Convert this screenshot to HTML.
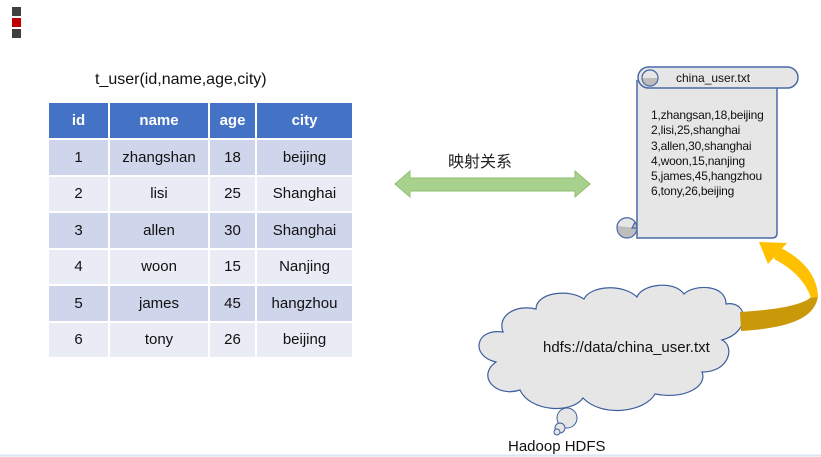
<!DOCTYPE html>
<html><head><meta charset="utf-8"><style>
body{margin:0;width:821px;height:457px;background:#fff;position:relative;overflow:hidden;font-family:"Liberation Sans","Noto Sans CJK SC",sans-serif;}
.a{position:absolute}
table{position:absolute;left:49px;top:103px;border-collapse:separate;border-spacing:2px 2px;font-size:15px;color:#111;margin:-2px}
td{text-align:center;height:34.5px;padding:0}
th{background:#4472C4;color:#fff;font-weight:bold;height:35px;padding:0}
tr.o td{background:#CFD5EA}tr.e td{background:#E9EBF5}
</style></head><body>
<div class="a" style="left:12px;top:7px;width:9px;height:9px;background:#404040"></div>
<div class="a" style="left:12px;top:18px;width:9px;height:9px;background:#c00000"></div>
<div class="a" style="left:12px;top:29px;width:9px;height:9px;background:#404040"></div>
<div class="a" style="left:95px;top:71px;font-size:16px;color:#111">t_user(id,name,age,city)</div>
<table>
<tr><th style="width:59px">id</th><th style="width:98px">name</th><th style="width:45px">age</th><th style="width:95px">city</th></tr>
<tr class="o"><td>1</td><td>zhangshan</td><td>18</td><td>beijing</td></tr>
<tr class="e"><td>2</td><td>lisi</td><td>25</td><td>Shanghai</td></tr>
<tr class="o"><td>3</td><td>allen</td><td>30</td><td>Shanghai</td></tr>
<tr class="e"><td>4</td><td>woon</td><td>15</td><td>Nanjing</td></tr>
<tr class="o"><td>5</td><td>james</td><td>45</td><td>hangzhou</td></tr>
<tr class="e"><td>6</td><td>tony</td><td>26</td><td>beijing</td></tr>
</table>
<div class="a" style="left:448px;top:148px;font-size:16px;color:#222">映射关系</div>
<svg class="a" style="left:0;top:0" width="821" height="457">
<polygon points="395,184 410,171 410,178 575,178 575,171 590,184 575,197 575,191 410,191 410,197" fill="#A9D18E" stroke="#8fbf6e"/>
<path d="M637,80 L637,238 L772,238 Q777,238 777,233 L777,88" fill="#e6e6e6" stroke="#4a6aa6" stroke-width="1.5"/>
<rect x="638" y="67" width="160" height="21" rx="10.5" fill="#e6e6e6" stroke="#4a6aa6" stroke-width="1.5"/>
<circle cx="650" cy="78" r="8" fill="#bdbdbd" stroke="#4a6aa6" stroke-width="1.2"/>
<path d="M642,78 A8,8 0 0 1 658,78" fill="#e6e6e6" stroke="#4a6aa6" stroke-width="1.2"/>
<circle cx="627" cy="228" r="10" fill="#bdbdbd" stroke="#4a6aa6" stroke-width="1.2"/>
<path d="M617,226 A10,10 0 0 1 635,222 L632,228 L637,228" fill="#e6e6e6" stroke="#4a6aa6" stroke-width="1.2"/>
<path d="M503,332 C475,328 470,356 496,362 C476,376 496,398 520,390 C530,412 572,414 583,398 C602,418 645,412 655,394 C685,400 708,386 702,372 C730,372 735,346 722,340 C752,332 748,300 726,304 C726,284 694,284 684,294 C674,280 642,284 637,297 C622,283 590,286 584,299 C568,288 536,293 536,309 C515,304 497,316 503,332 Z" fill="#e6e6e6" stroke="#3d5f9e" stroke-width="1.2"/>
<circle cx="567" cy="418" r="10" fill="#e6e6e6" stroke="#3d5f9e" stroke-width="1"/>
<circle cx="560" cy="428" r="5" fill="#e6e6e6" stroke="#3d5f9e" stroke-width="1"/>
<circle cx="557" cy="432" r="3" fill="#e6e6e6" stroke="#3d5f9e" stroke-width="1"/>
<path d="M740,312 C775,310 805,305 812,296 L818,296 C815,318 790,328 741,331 Z" fill="#C9990A"/>
<path d="M779,247 C802,258 818,276 818,297 L811,298 C806,282 792,268 774,259 Z" fill="#FFC000"/>
<polygon points="759,242 787,243 768,264" fill="#FFC000"/>
<line x1="0" y1="455.5" x2="821" y2="455.5" stroke="#dbe6f4" stroke-width="2"/>
</svg>
<div class="a" style="left:676px;top:71px;font-size:12px;color:#111">china_user.txt</div>
<div class="a" style="left:651px;top:108px;font-size:12px;line-height:15.3px;color:#111;letter-spacing:-0.2px">1,zhangsan,18,beijing<br>2,lisi,25,shanghai<br>3,allen,30,shanghai<br>4,woon,15,nanjing<br>5,james,45,hangzhou<br>6,tony,26,beijing</div>
<div class="a" style="left:543px;top:339px;font-size:15px;color:#111">hdfs://data/china_user.txt</div>
<div class="a" style="left:508px;top:438px;font-size:15px;color:#111">Hadoop HDFS</div>
</body></html>
